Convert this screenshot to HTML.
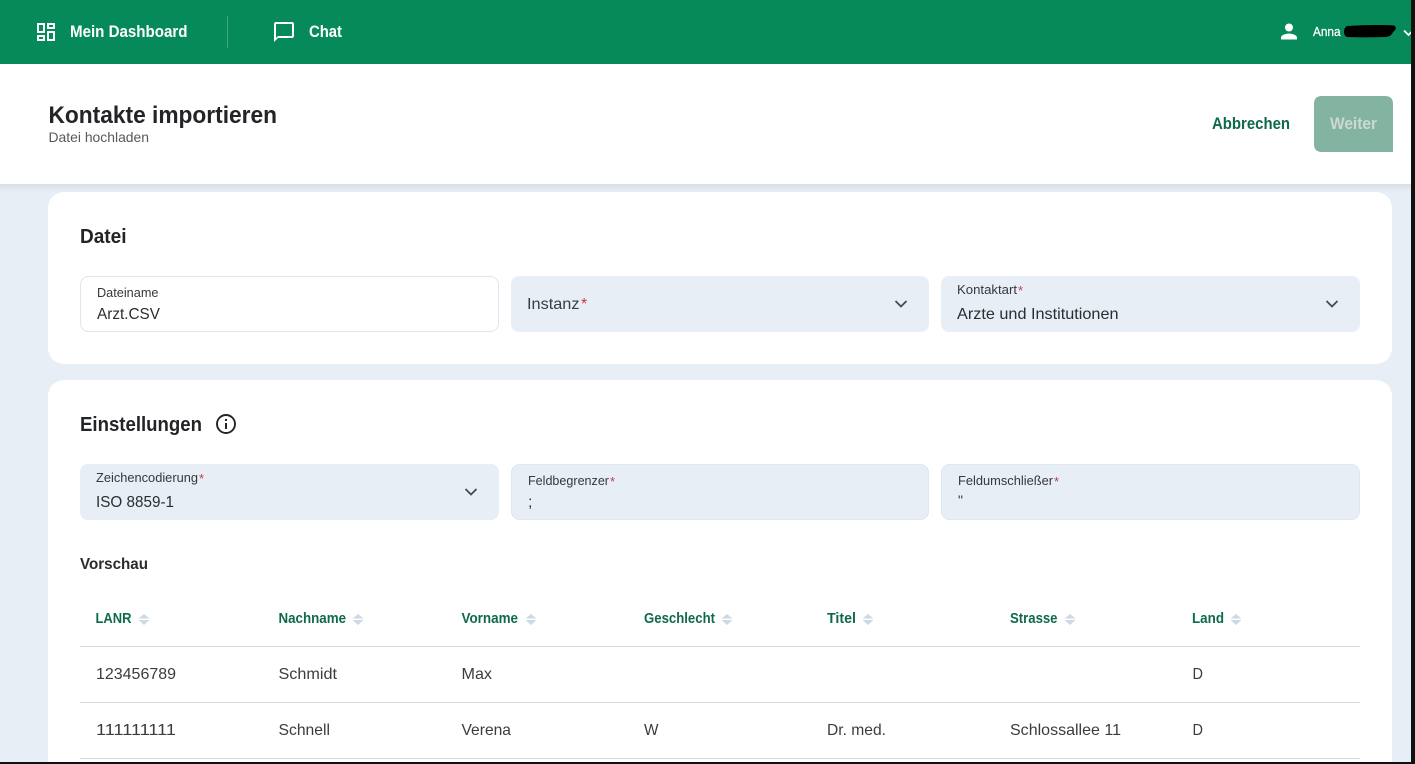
<!DOCTYPE html>
<html lang="de">
<head>
<meta charset="utf-8">
<title>Kontakte importieren</title>
<style>
html,body{margin:0;padding:0;width:1415px;height:764px;overflow:hidden;background:#e8eef6}
svg{display:block}
text{font-family:"Liberation Sans",sans-serif}
.b{font-weight:700}
.g{fill:#0f6a4c}
.h{fill:#fff}
.t{fill:#2b2d30;font-size:16px}
.l{fill:#35383c;font-size:12.5px}
.r{fill:#c8374f}
.hd{fill:#0f6a4c;font-size:14.5px;font-weight:700}
.td{fill:#3a3c3f;font-size:16px}
</style>
</head>
<body>
<svg width="1415" height="764" viewBox="0 0 1415 764" xmlns="http://www.w3.org/2000/svg">
<defs>
<linearGradient id="sh" x1="0" y1="0" x2="0" y2="1"><stop offset="0" stop-color="#d8dfe8"/><stop offset="1" stop-color="#e8eef6"/></linearGradient>
<g id="sort"><path d="M-5.500 -0.500L0 -5L5.500 -0.500Z" fill="#ced9e3"/><path d="M-5.500 1L5.500 1L0 6Z" fill="#ced9e3"/></g>
</defs>
<rect width="1415" height="764" fill="#e8eef6"/>

<!-- top bar -->
<rect width="1415" height="64" fill="#068a5a"/>
<path transform="translate(34,20)" fill="#fff" d="M19 5v2h-4V5h4M9 5v6H5V5h4m10 8v6h-4v-6h4M9 17v2H5v-2h4M21 3h-8v6h8V3zM11 3H3v10h8V3zm10 8h-8v10h8V11zm-10 4H3v6h8v-6z"/>
<text x="70" y="37" class="b h" font-size="17" textLength="117.500" lengthAdjust="spacingAndGlyphs">Mein Dashboard</text>
<rect x="227" y="16" width="1" height="32" fill="#3fa67f"/>
<path transform="translate(272,20)" fill="#fff" d="M20 2H4c-1.100 0-2 .9-2 2v18l4-4h14c1.100 0 2-.9 2-2V4c0-1.100-.9-2-2-2zm0 14H6l-2 2V4h16v12z"/>
<text x="309" y="37" class="b h" font-size="17" textLength="33" lengthAdjust="spacingAndGlyphs">Chat</text>
<path transform="translate(1277,19.500)" fill="#fff" d="M12 12c2.210 0 4-1.790 4-4s-1.790-4-4-4-4 1.790-4 4 1.790 4 4 4zm0 2c-2.670 0-8 1.340-8 4v2h16v-2c0-2.660-5.330-4-8-4z"/>
<text x="1313" y="36" class="h" font-size="12.500" stroke="#fff" stroke-width="0.250" textLength="27.500" lengthAdjust="spacingAndGlyphs">Anna</text>
<path d="M1347 26C1360 25 1385 24.500 1394 25.500C1397 27 1396 30 1393 32C1392 35 1389 37 1385 37C1372 37.500 1358 37.500 1347 37C1343 36 1343 28 1347 26Z" fill="#000"/>
<path d="M1404 30.500L1408.500 35L1413 30.500" fill="none" stroke="#fff" stroke-width="1.800"/>

<!-- page header -->
<rect y="184" width="1415" height="8" fill="url(#sh)"/>
<rect y="64" width="1415" height="120" fill="#fff"/>
<text x="48.500" y="123" class="b" font-size="24" fill="#222427" textLength="228.500" lengthAdjust="spacingAndGlyphs">Kontakte importieren</text>
<text x="48.500" y="142" font-size="14" fill="#55585c" textLength="100.500" lengthAdjust="spacingAndGlyphs">Datei hochladen</text>
<text x="1212" y="129" class="b g" font-size="16.500" textLength="78" lengthAdjust="spacingAndGlyphs">Abbrechen</text>
<path d="M1322 96H1385Q1393 96 1393 104V152H1322Q1314 152 1314 144V104Q1314 96 1322 96Z" fill="#83b3a1"/>
<text x="1330" y="129" class="b" font-size="16.500" fill="#ced8d3" textLength="47" lengthAdjust="spacingAndGlyphs">Weiter</text>

<!-- Datei card -->
<rect x="48" y="192" width="1344" height="172" rx="16" fill="#fff"/>
<text x="80" y="243" class="b" font-size="20" fill="#222427" textLength="46.500" lengthAdjust="spacingAndGlyphs">Datei</text>

<rect x="80.500" y="276.500" width="418" height="55" rx="8" fill="#fff" stroke="#e0e6ee"/>
<text x="97" y="297" class="l" textLength="61.500" lengthAdjust="spacingAndGlyphs">Dateiname</text>
<text x="97" y="319" class="t" textLength="63" lengthAdjust="spacingAndGlyphs">Arzt.CSV</text>

<rect x="511" y="276" width="418" height="56" rx="8" fill="#e8eef6"/>
<text x="527" y="309" fill="#3a3c40" font-size="16" textLength="52.500" lengthAdjust="spacingAndGlyphs">Instanz</text>
<text x="581" y="309" class="r" font-size="16">*</text>
<path d="M895.500 301L901 306.500L906.500 301" fill="none" stroke="#454a50" stroke-width="1.800"/>

<rect x="941" y="276" width="419" height="56" rx="8" fill="#e8eef6"/>
<text x="957" y="294" class="l" textLength="60" lengthAdjust="spacingAndGlyphs">Kontaktart</text>
<text x="1018" y="295" class="r" font-size="13">*</text>
<text x="957" y="319" class="t" textLength="161.500" lengthAdjust="spacingAndGlyphs">Arzte und Institutionen</text>
<path d="M1326.500 301L1332 306.500L1337.500 301" fill="none" stroke="#454a50" stroke-width="1.800"/>

<!-- Einstellungen card -->
<rect x="48" y="380" width="1344" height="400" rx="16" fill="#fff"/>
<text x="80" y="431" class="b" font-size="20" fill="#222427" textLength="122" lengthAdjust="spacingAndGlyphs">Einstellungen</text>
<circle cx="226" cy="424" r="9" fill="none" stroke="#222427" stroke-width="1.900"/>
<rect x="225" y="423" width="2" height="6" fill="#222427"/>
<rect x="225" y="419" width="2" height="2" fill="#222427"/>

<rect x="80" y="464" width="419" height="56" rx="8" fill="#e8eef6"/>
<text x="96" y="482" class="l" textLength="102" lengthAdjust="spacingAndGlyphs">Zeichencodierung</text>
<text x="199" y="483" class="r" font-size="13">*</text>
<text x="96" y="507" class="t" textLength="78" lengthAdjust="spacingAndGlyphs">ISO 8859-1</text>
<path d="M465.500 489L471 494.500L476.500 489" fill="none" stroke="#454a50" stroke-width="1.800"/>

<rect x="511.500" y="464.500" width="417" height="55" rx="8" fill="#e8eef6" stroke="#e0e7ef"/>
<text x="528" y="485" class="l" textLength="81" lengthAdjust="spacingAndGlyphs">Feldbegrenzer</text>
<text x="610" y="486" class="r" font-size="13">*</text>
<text x="528" y="507" fill="#3a3c40" font-size="16">;</text>

<rect x="941.500" y="464.500" width="418" height="55" rx="8" fill="#e8eef6" stroke="#e0e7ef"/>
<text x="958" y="485" class="l" textLength="95" lengthAdjust="spacingAndGlyphs">Feldumschließer</text>
<text x="1054" y="486" class="r" font-size="13">*</text>
<text x="958" y="505" fill="#3a3c40" font-size="14">"</text>

<text x="80" y="569" class="b" font-size="15.500" fill="#2a2c2f" textLength="68" lengthAdjust="spacingAndGlyphs">Vorschau</text>

<!-- table header -->
<text x="95.500" y="623" class="hd" textLength="36" lengthAdjust="spacingAndGlyphs">LANR</text>
<use href="#sort" x="144" y="619"/>
<text x="278.500" y="623" class="hd" textLength="67.500" lengthAdjust="spacingAndGlyphs">Nachname</text>
<use href="#sort" x="358" y="619"/>
<text x="461.500" y="623" class="hd" textLength="56.500" lengthAdjust="spacingAndGlyphs">Vorname</text>
<use href="#sort" x="531" y="619"/>
<text x="644" y="623" class="hd" textLength="71" lengthAdjust="spacingAndGlyphs">Geschlecht</text>
<use href="#sort" x="727" y="619"/>
<text x="827" y="623" class="hd" textLength="29" lengthAdjust="spacingAndGlyphs">Titel</text>
<use href="#sort" x="868" y="619"/>
<text x="1010" y="623" class="hd" textLength="47.500" lengthAdjust="spacingAndGlyphs">Strasse</text>
<use href="#sort" x="1070" y="619"/>
<text x="1192" y="623" class="hd" textLength="32" lengthAdjust="spacingAndGlyphs">Land</text>
<use href="#sort" x="1236" y="619"/>

<rect x="80" y="646" width="1280" height="1" fill="#d6dbe0"/>
<text x="96" y="679" class="td" textLength="80" lengthAdjust="spacingAndGlyphs">123456789</text>
<text x="278.500" y="679" class="td" textLength="58.500" lengthAdjust="spacingAndGlyphs">Schmidt</text>
<text x="461.500" y="679" class="td" textLength="30.500" lengthAdjust="spacingAndGlyphs">Max</text>
<text x="1192.500" y="679" class="td" textLength="10.500" lengthAdjust="spacingAndGlyphs">D</text>

<rect x="80" y="702" width="1280" height="1" fill="#d6dbe0"/>
<text x="96" y="735" class="td" textLength="80" lengthAdjust="spacingAndGlyphs">111111111</text>
<text x="278.500" y="735" class="td" textLength="51.500" lengthAdjust="spacingAndGlyphs">Schnell</text>
<text x="461.500" y="735" class="td" textLength="49.500" lengthAdjust="spacingAndGlyphs">Verena</text>
<text x="644" y="735" class="td" textLength="14.500" lengthAdjust="spacingAndGlyphs">W</text>
<text x="827" y="735" class="td" textLength="59" lengthAdjust="spacingAndGlyphs">Dr. med.</text>
<text x="1010" y="735" class="td" textLength="111" lengthAdjust="spacingAndGlyphs">Schlossallee 11</text>
<text x="1192.500" y="735" class="td" textLength="10.500" lengthAdjust="spacingAndGlyphs">D</text>
<rect x="80" y="758" width="1280" height="1" fill="#d6dbe0"/>

<!-- black screenshot edges -->
<rect x="1411" y="0" width="4" height="764" fill="#111"/>
<rect x="0" y="762" width="1415" height="2" fill="#111"/>
</svg>
</body>
</html>
